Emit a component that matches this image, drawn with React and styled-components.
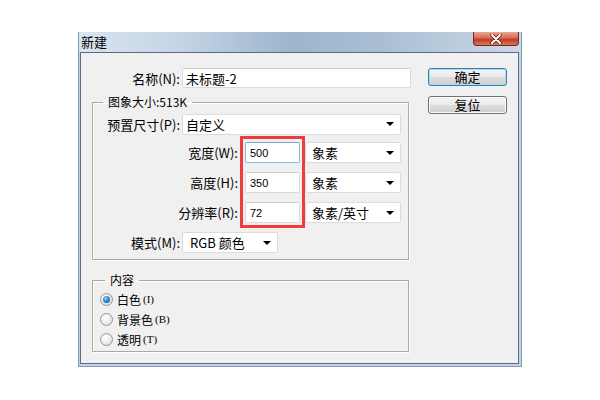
import styled, { createGlobalStyle } from "styled-components";

const GlobalStyle = createGlobalStyle`
  html, body {
    margin: 0;
    padding: 0;
    background: #ffffff;
  }
  body {
    width: 600px;
    height: 400px;
    overflow: hidden;
    font-family: "Noto Sans CJK SC", "Liberation Sans", sans-serif;
    font-size: 12px;
    color: #000;
  }
`;

const Window = styled.div`
  box-sizing: border-box;
  width: 444px;
  height: 335px;
  margin: 32px 0 0 78px;
  display: flex;
  flex-direction: column;
  background: #c3d3e5;
  border: 1px solid #8198b1;
  border-top: none;
  padding: 0 2px 2px 1px;
`;

const TitleBar = styled.div`
  height: 20px;
  margin: 0 -2px 0 -1px;
  padding: 0 2px 0 2px;
  display: flex;
  justify-content: space-between;
  align-items: flex-start;
  background: linear-gradient(
    90deg,
    #d9e4f0 0%,
    #c6d5e5 22%,
    #9db5cd 48%,
    #a9bed3 68%,
    #cbd8e6 100%
  );
`;

const Title = styled.span`
  font-size: 13px;
  line-height: 20px;
  color: #000;
`;

const CloseButton = styled.div`
  width: 46px;
  height: 14px;
  box-sizing: border-box;
  display: flex;
  align-items: center;
  justify-content: center;
  border: 1px solid #6b2a22;
  border-top: none;
  border-radius: 0 0 4px 4px;
  background: linear-gradient(#e9a694 0%, #d66b52 45%, #c13b24 60%, #d77a60 100%);
`;

const Client = styled.div`
  flex: 1;
  display: flex;
  align-items: flex-start;
  background: #f0f0f0;
  border: 1px solid #596d84;
  padding: 15px 0 0 11px;
`;

const LeftColumn = styled.div`
  width: 319px;
  display: flex;
  flex-direction: column;
`;

const RightColumn = styled.div`
  margin-left: 17px;
  display: flex;
  flex-direction: column;
  gap: 10px;
`;

const Row = styled.div`
  display: flex;
  align-items: center;
  height: ${(p) => p.$h || 21}px;
  margin-top: ${(p) => p.$mt || 0}px;
`;

const Label = styled.span`
  width: ${(p) => p.$w}px;
  text-align: right;
  margin-right: ${(p) => p.$gap ?? 2}px;
  white-space: nowrap;
  font-size: 13px;
  line-height: 21px;
`;

const TextBox = styled.input`
  box-sizing: border-box;
  width: ${(p) => p.$w}px;
  height: ${(p) => p.$h || 21}px;
  margin: 0;
  padding: 0 0 0 ${(p) => p.$pl || 4}px;
  border: 1px solid ${(p) => (p.$focused ? "#8fb6dc" : "#dadada")};
  border-top-color: ${(p) => (p.$focused ? "#7aa5d0" : "#cfcfcf")};
  border-radius: 2px;
  background: #fff;
  font-family: ${(p) =>
    p.$cjk ? '"Noto Sans CJK SC", sans-serif' : '"Liberation Sans", sans-serif'};
  font-size: ${(p) => (p.$cjk ? 13 : 11)}px;
  color: #000;
  outline: none;
`;

const Select = styled.div`
  box-sizing: border-box;
  width: ${(p) => p.$w}px;
  height: 21px;
  display: flex;
  align-items: center;
  justify-content: space-between;
  padding: 0 6px 0 ${(p) => p.$pl || 6}px;
  border: 1px solid #dcdcdc;
  border-radius: 2px;
  background: #fff;
  font-size: 13px;
  line-height: 19px;
  white-space: nowrap;

  &::after {
    content: "";
    border-left: 4px solid transparent;
    border-right: 4px solid transparent;
    border-top: 4px solid #000;
  }
`;

const Group = styled.fieldset`
  box-sizing: border-box;
  width: 317px;
  margin: ${(p) => p.$mt}px 0 0 0;
  padding: ${(p) => p.$pad};
  border: 1px solid #a9a9a9;
  box-shadow: inset 1px 1px 0 #fff, 1px 1px 0 #fff;
  min-width: 0;
`;

const Legend = styled.legend`
  margin-left: ${(p) => p.$ml}px;
  padding: 0 5px;
  line-height: 16px;
  font-size: 12px;
`;

const SizeGrid = styled.div`
  display: flex;
  align-items: flex-start;
  margin-top: 2px;
`;

const Column = styled.div`
  display: flex;
  flex-direction: column;
  gap: 9px;
  padding-top: ${(p) => p.$pt || 0}px;
`;

const ColumnLabel = styled.span`
  width: 145px;
  height: 21px;
  font-size: 13px;
  line-height: 21px;
  text-align: right;
  white-space: nowrap;
`;

const Highlight = styled.div`
  box-sizing: border-box;
  width: 65px;
  margin-left: 2px;
  padding: 3px 0 2px 2px;
  border: 3px solid #f03c3c;
  display: flex;
  flex-direction: column;
  gap: 9px;
`;

const RadioRow = styled.label`
  display: flex;
  align-items: center;
  height: 20px;
`;

const RadioDot = styled.span`
  box-sizing: border-box;
  width: 13px;
  height: 13px;
  border-radius: 50%;
  border: 1px solid #979797;
  background: radial-gradient(circle at 40% 35%, #ffffff 0%, #e8e8e8 60%, #cfcfcf 100%);
  display: flex;
  align-items: center;
  justify-content: center;
  margin-right: 4px;

  &::after {
    content: "";
    display: ${(p) => (p.$checked ? "block" : "none")};
    width: 7px;
    height: 7px;
    border-radius: 50%;
    background: radial-gradient(circle at 40% 35%, #8fd2ff 0%, #2f8ad6 45%, #0f4f8c 100%);
  }
`;

const Mnemonic = styled.span`
  font-family: "Liberation Serif", serif;
  font-size: 11px;
  margin-left: 2px;
`;

const Button = styled.div`
  box-sizing: border-box;
  width: 79px;
  height: 18px;
  display: flex;
  align-items: center;
  justify-content: center;
  border: 1px solid ${(p) => (p.$default ? "#3d7bad" : "#707070")};
  border-radius: 3px;
  background: linear-gradient(#f4f4f4 0%, #ebebeb 48%, #dddddd 52%, #cfcfcf 100%);
  box-shadow: inset 0 0 0 1px ${(p) => (p.$default ? "#9fe0f7" : "#fcfcfc")};
  font-size: 13px;
  line-height: 16px;
`;

const CloseIcon = () => (
  <svg width="12" height="10" viewBox="0 0 12 10">
    <path d="M2 1 L10 9 M10 1 L2 9" stroke="#4a1a12" strokeWidth="3.4" strokeLinecap="round" />
    <path d="M2 1 L10 9 M10 1 L2 9" stroke="#ffffff" strokeWidth="2" strokeLinecap="round" />
  </svg>
);

const App = () => {
  return (
    <>
      <GlobalStyle />
      <Window>
        <TitleBar>
          <Title>新建</Title>
          <CloseButton>
            <CloseIcon />
          </CloseButton>
        </TitleBar>
        <Client>
          <LeftColumn>
            <Row $h={20}>
              <Label $w={88}>名称(N):</Label>
              <TextBox $w={229} $h={20} $pl={3} $cjk defaultValue="未标题-2" />
            </Row>

            <Group $mt={6} $pad="4px 0 6px 0">
              <Legend $ml={10}>图象大小:513K</Legend>
              <Row $h={20}>
                <Label $w={87}>预置尺寸(P):</Label>
                <Select $w={219} $pl={3}>自定义</Select>
              </Row>
              <SizeGrid>
                <Column $pt={6}>
                  <ColumnLabel>宽度(W):</ColumnLabel>
                  <ColumnLabel>高度(H):</ColumnLabel>
                  <ColumnLabel>分辨率(R):</ColumnLabel>
                </Column>
                <Highlight>
                  <TextBox $w={55} $focused defaultValue="500" />
                  <TextBox $w={55} defaultValue="350" />
                  <TextBox $w={55} defaultValue="72" />
                </Highlight>
                <Column $pt={6}>
                  <Select $w={96}>象素</Select>
                  <Select $w={96}>象素</Select>
                  <Select $w={96}>象素/英寸</Select>
                </Column>
              </SizeGrid>
              <Row $mt={4}>
                <Label $w={87}>模式(M):</Label>
                <Select $w={96} $pl={7}>RGB 颜色</Select>
              </Row>
            </Group>

            <Group $mt={12} $pad="1px 0 2px 7px">
              <Legend $ml={5}>内容</Legend>
              <RadioRow>
                <RadioDot $checked />
                白色<Mnemonic>(I)</Mnemonic>
              </RadioRow>
              <RadioRow>
                <RadioDot />
                背景色<Mnemonic>(B)</Mnemonic>
              </RadioRow>
              <RadioRow>
                <RadioDot />
                透明<Mnemonic>(T)</Mnemonic>
              </RadioRow>
            </Group>
          </LeftColumn>

          <RightColumn>
            <Button $default>确定</Button>
            <Button>复位</Button>
          </RightColumn>
        </Client>
      </Window>
    </>
  );
};

export default App;
